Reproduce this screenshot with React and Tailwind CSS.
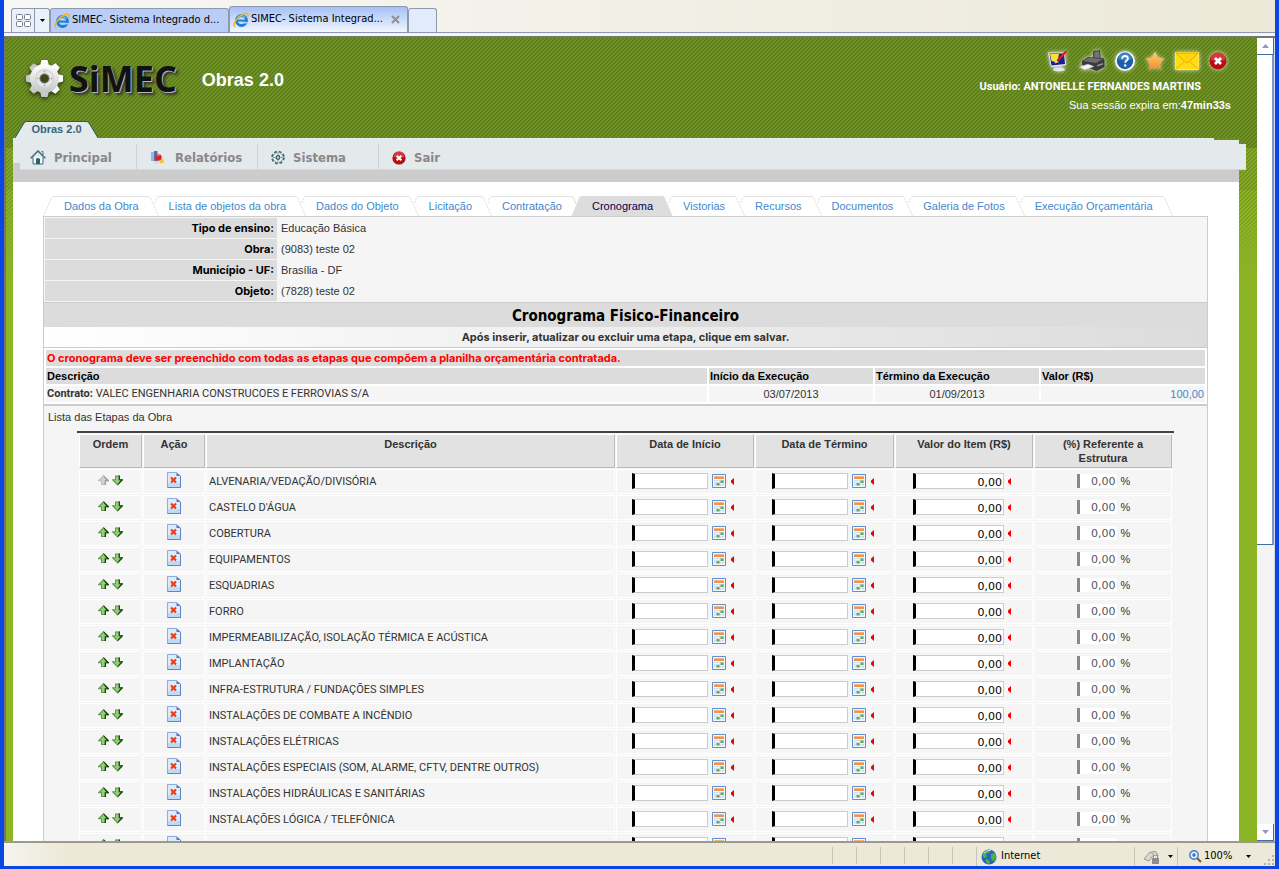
import { useState } from 'react';

const TABS = [
	'Dados da Obra',
	'Lista de objetos da obra',
	'Dados do Objeto',
	'Licitação',
	'Contratação',
	'Cronograma',
	'Vistorias',
	'Recursos',
	'Documentos',
	'Galeria de Fotos',
	'Execução Orçamentária',
];

const ETAPAS = [
	'ALVENARIA/VEDAÇÃO/DIVISÓRIA',
	"CASTELO D'ÁGUA",
	'COBERTURA',
	'EQUIPAMENTOS',
	'ESQUADRIAS',
	'FORRO',
	'IMPERMEABILIZAÇÃO, ISOLAÇÃO TÉRMICA E ACÚSTICA',
	'IMPLANTAÇÃO',
	'INFRA-ESTRUTURA / FUNDAÇÕES SIMPLES',
	'INSTALAÇÕES DE COMBATE A INCÊNDIO',
	'INSTALAÇÕES ELÉTRICAS',
	'INSTALAÇÕES ESPECIAIS (SOM, ALARME, CFTV, DENTRE OUTROS)',
	'INSTALAÇÕES HIDRÁULICAS E SANITÁRIAS',
	'INSTALAÇÕES LÓGICA / TELEFÔNICA',
	'',
];

const DADOS = [
	['Tipo de ensino:', 'Educação Básica'],
	['Obra:', '(9083) teste 02'],
	['Município - UF:', 'Brasília - DF'],
	['Objeto:', '(7828) teste 02'],
];

/* ---------- icons ---------- */

function IeIcon() {
	return (
		<svg width="16" height="16" viewBox="0 0 16 16" className="shrink-0">
			<circle cx="8.500" cy="8.500" r="5" fill="none" stroke="#1c7fd6" strokeWidth="2.800" />
			<path d="M9 9.900h6v1.600H9z" fill="#b9cdf6" />
			<path d="M5 8.600h9.500" stroke="#1c7fd6" strokeWidth="2" />
			<path d="M12.400 5.500A4.800 4.800 0 0 0 4.600 5.600" fill="none" stroke="#6cc4f5" strokeWidth="1.200" />
			<path d="M2.600 14.800C.2 14.600.6 10.600 4.400 6.400 8 2.400 13 .2 14.600 1.600c.8.700.5 2-.2 3.200" fill="none" stroke="#f0b428" strokeWidth="1.500" />
		</svg>
	);
}

function Gear() {
	return (
		<svg width="40" height="42" viewBox="0 0 40 42" className="drop-shadow-[0_2px_2px_rgba(0,0,0,0.6)]">
			<defs>
				<linearGradient id="gear" x1="0" y1="0" x2="0" y2="1">
					<stop offset="0" stopColor="#ffffff" />
					<stop offset="1" stopColor="#c4c4c4" />
				</linearGradient>
			</defs>
			<g fill="url(#gear)">
				{[0, 45, 90, 135].map((a) => (
					<path key={a} d="M16.5 1h6l1.5 6v25l-1.5 6h-6l-1.5-6V7z" transform={`rotate(${a} 19.5 19.5)`} />
				))}
				<circle cx="19.5" cy="19.5" r="14.5" />
			</g>
			<circle cx="19.5" cy="19.5" r="9" fill="#e6e6e6" stroke="#cfcfcf" />
			<circle cx="19.5" cy="19.5" r="4.6" fill="#3b4a1a" stroke="#777" />
			<g fill="#999">
				<circle cx="19.5" cy="12.5" r=".8" />
				<circle cx="19.5" cy="26.5" r=".8" />
				<circle cx="12.5" cy="19.5" r=".8" />
				<circle cx="26.5" cy="19.5" r=".8" />
			</g>
		</svg>
	);
}

function MonitorIcon() {
	return (
		<svg width="22" height="22" viewBox="0 0 22 22">
			<path d="M1 2.500h16.500L19 15 4 17z" fill="#e9e9ee" />
			<path d="M2.500 3.500H17l1 10.500-13.500 1.500z" fill="#14209a" />
			<path d="M3 4h9l-1 5-3 3-3.500-1z" fill="#f4e23a" />
			<path d="M10 9.500L18.500.5 20 2l-8 9z" fill="#e01818" />
			<path d="M9 10l3 2-4.500 1.500z" fill="#ffe850" />
			<path d="M8.500 16h6l1 2.500h-8z" fill="#c8c8d0" />
			<ellipse cx="12" cy="19.500" rx="6" ry="1.800" fill="#e6e6ea" />
		</svg>
	);
}

function PrinterIcon() {
	return (
		<svg width="26" height="22" viewBox="0 0 26 22">
			<path d="M14 1l7-1 1 10h-8z" fill="#4c4c50" />
			<path d="M15.500 2l4.500-.5.5 7h-5z" fill="#74747a" />
			<path d="M3 11l6-4 15 1 1.500 2v7l-8 4L3 15z" fill="#3a3a3e" />
			<path d="M4 11l6-3.500 14 1.500-7 4z" fill="#6c6c72" />
			<path d="M0 17l9-3 6 2.500L6 20z" fill="#f4f4f4" stroke="#999" strokeWidth=".5" />
			<path d="M18 15l6-2v1.500l-6 2z" fill="#999" />
		</svg>
	);
}

function HelpIcon() {
	return (
		<svg width="20" height="20" viewBox="0 0 20 20">
			<circle cx="10" cy="10" r="9" fill="#1d5fae" stroke="#fff" strokeWidth="1.6" />
			<path d="M3 8a7 7 0 0 1 14 0c-4 2-10 2-14 0z" fill="#4b8bd0" opacity=".7" />
			<path d="M7.200 7.800C7.200 5.800 8.500 5 10 5s2.900.9 2.900 2.500c0 2-2.700 2-2.700 4.300" fill="none" stroke="#fff" strokeWidth="1.900" />
			<circle cx="10.200" cy="14.400" r="1.250" fill="#fff" />
		</svg>
	);
}

function StarIcon() {
	return (
		<svg width="20" height="20" viewBox="0 0 20 20">
			<defs>
				<linearGradient id="star" x1="0" y1="0" x2="0" y2="1">
					<stop offset="0" stopColor="#ffd27a" />
					<stop offset="1" stopColor="#f68a1e" />
				</linearGradient>
			</defs>
			<path d="M10 0.500l2.900 6.300 6.600.8-4.900 4.600 1.400 6.800L10 15.700 4 19l1.400-6.800L.5 7.600l6.600-.8z" fill="url(#star)" />
		</svg>
	);
}

function MailIcon() {
	return (
		<svg width="24" height="18" viewBox="0 0 24 18">
			<path d="M.5.5h23v17H.5z" fill="#ffdc14" stroke="#ffe850" />
			<path d="M1 17l8.500-7.500M23 17l-8.500-7.500" fill="none" stroke="#f0b400" />
			<path d="M1 1l8.500 8.500q2.500 2 5 0L23 1z" fill="#ffd60a" stroke="#e8a800" />
		</svg>
	);
}

function CloseIcon({ size }) {
	return (
		<svg width={size} height={size} viewBox="0 0 18 18">
			<circle cx="9" cy="9" r="8.500" fill="#b80d14" />
			<path d="M1.500 7.500a7.500 7.500 0 0 1 15 0c-4 2-11 2-15 0z" fill="#e05a5a" opacity=".6" />
			<path d="M6 6l6 6M12 6l-6 6" stroke="#fff" strokeWidth="2.800" />
		</svg>
	);
}

function HomeIcon() {
	return (
		<svg width="16" height="15" viewBox="0 0 16 15">
			<path d="M3 7v7h10V7" fill="#f4f8f8" stroke="#3c6e78" />
			<path d="M.7 8.300L8 1l7.300 7.300" fill="none" stroke="#3c7580" strokeWidth="1.600" />
			<path d="M11.500 1.500h1.500V5" fill="none" stroke="#3c7580" />
			<path d="M6 14V9q2-2 4 0v5z" fill="#2f5f6b" />
		</svg>
	);
}

function ChartIcon() {
	return (
		<svg width="17" height="13" viewBox="0 0 17 13">
			<path d="M1 1h3v9H1z" fill="#9db4da" />
			<path d="M4 0h3.500v10H4z" fill="#4a72b8" />
			<circle cx="8.500" cy="6.500" r="3.200" fill="#dc2222" />
			<path d="M7 5q1-1.500 3-1" stroke="#f59090" fill="none" />
			<path d="M9.500 10.500l2.500-3 1.500 1 .5 3-3.500 1z" fill="#f5c431" />
			<path d="M3 10h5l2 2-4 .5z" fill="#d3d8e4" />
		</svg>
	);
}

function CogIcon() {
	return (
		<svg width="14" height="15" viewBox="0 0 15 15">
			<circle cx="7.500" cy="7.500" r="6.300" fill="none" stroke="#476a70" strokeWidth="2" strokeDasharray="3 1.950" />
			<circle cx="7.500" cy="7.500" r="5.300" fill="#edf3f3" stroke="#6d8b90" strokeWidth=".8" />
			<circle cx="7.500" cy="7.500" r="2" fill="#c5d8da" stroke="#2c4c52" strokeWidth="1.200" />
			<path d="M7.500 3.500v1M7.500 10.500v1M3.500 7.500h1M10.500 7.500h1" stroke="#2c4c52" />
		</svg>
	);
}

function ArrowUp({ off }) {
	return (
		<svg width="11" height="11" viewBox="0 0 11 11">
			<path d="M5.500 0L0 5.500v.8h3V10h5V6.300h3v-.8z" fill={off ? '#bdbdbd' : '#5f9a48'} />
			<path d="M5.500 0L11 5.500v.8H8V10H6.500V5z" fill={off ? '#9c9c9c' : '#1f3f1a'} />
			<path d="M5.500 1.500L2 5.300h2V9h2.500V5.300h2z" fill={off ? '#d2d2d2' : '#93cf78'} />
		</svg>
	);
}

function ArrowDown() {
	return (
		<svg width="11" height="11" viewBox="0 0 11 11">
			<path d="M5.500 10.500L0 5v-.8h3V.5h5v3.700h3V5z" fill="#5f9a48" />
			<path d="M5.500 10.500L11 5v-.8H8V.5H6.500v4.500z" fill="#27491f" />
			<path d="M5.500 9L2 5.200h2V1.500h2.500v3.700h2z" fill="#93cf78" />
		</svg>
	);
}

function DeleteIcon() {
	return (
		<svg width="14" height="16" viewBox="0 0 14 16">
			<path d="M.5.500h9L13.500 4v11.500H.5z" fill="#dcecfd" stroke="#8fabdc" />
			<path d="M1 11h12v4H1z" fill="#bcdaf9" />
			<path d="M.5 15.500h13V4" fill="none" stroke="#5f84c4" />
			<path d="M9.500 .5V4h4z" fill="#5279bd" />
			<path d="M4 5.500l5 5M9 5.500l-5 5" stroke="#f03c14" strokeWidth="2.200" />
		</svg>
	);
}

function CalendarIcon() {
	return (
		<svg width="14" height="14" viewBox="0 0 14 14">
			<path d="M.5.5h13v13H.5z" fill="#f3f8fe" stroke="#5b8fd0" />
			<path d="M2 2h10v3H2z" fill="#f6924a" />
			<path d="M2 2h10v1H2z" fill="#f9b27c" />
			<path d="M2 6h10v5.500H2z" fill="#c3d8f2" />
			<path d="M2 7.500h10M2 9.500h10M4 6v6M6.500 6v6M9.500 6v6" stroke="#f3f8fe" strokeWidth=".7" />
			<path d="M4.500 9h3v2.500h-3zM8.500 6.500h3V9h-3z" fill="#62ac4e" />
		</svg>
	);
}

function GlobeIcon() {
	return (
		<svg width="16" height="16" viewBox="0 0 16 16">
			<circle cx="8" cy="8" r="7.500" fill="#2566b8" />
			<path d="M2 4q3-4 7-3L8 4 5 5l1 3-3 1q-2-2-1-5zM10 5l4-1q2 4 0 7l-3 1-1-3zM5 10l3 1 1 3-2 1q-3-2-2-5z" fill="#4eb04a" />
			<path d="M3 4q3-3.500 7-2.500" stroke="#bde3ff" fill="none" />
		</svg>
	);
}

function Required() {
	return (
		<svg width="3" height="7" viewBox="0 0 3 7">
			<path d="M3 0v7L0 4.500v-2z" fill="#f00000" />
		</svg>
	);
}

function Caret({ up, color }) {
	return (
		<svg width="7" height="4" viewBox="0 0 7 4" className={up ? 'rotate-180' : ''}>
			<path d="M0 0h7L3.500 4z" fill={color || '#000'} />
		</svg>
	);
}

/* ---------- browser ---------- */

function BrowserTabs() {
	return (
		<div className="flex items-end h-[33px] shrink-0 pl-[7px] border-b border-[#8d99ae] bg-gradient-to-r from-[#f7f7f5] to-[#ece9d8] font-['DejaVu_Sans_Condensed','DejaVu_Sans',sans-serif] text-[11px] text-black">
			<div className="flex h-6 rounded-t-[3px] border border-b-0 border-[#8d99ae] bg-[#eaf1fb]">
				<button aria-label="Guias rápidas" className="w-[23px] flex items-center justify-center border-r border-[#8d99ae]">
					<svg width="15" height="13" viewBox="0 0 15 13" fill="#fff" stroke="#7b7f90">
						<rect x=".5" y=".5" width="6" height="5" rx="1" />
						<rect x="8.500" y=".5" width="6" height="5" rx="1" />
						<rect x=".5" y="7.500" width="6" height="5" rx="1" />
						<rect x="8.500" y="7.500" width="6" height="5" rx="1" />
					</svg>
				</button>
				<button aria-label="Lista de guias" className="w-[14px] flex items-center justify-center">
					<svg width="5" height="3" viewBox="0 0 5 3"><path d="M0 0h5L2.500 3z" /></svg>
				</button>
			</div>
			<button className="flex items-center gap-0.5 w-[179px] h-6 px-[3px] rounded-t-[3px] border border-b-0 border-[#8d99ae] bg-[#b9cdf6] whitespace-nowrap">
				<IeIcon />
				SIMEC- Sistema Integrado d...
			</button>
			<div className="flex items-center w-[179px] h-[26px] px-[3px] rounded-t-[3px] border border-b-0 border-[#8d99ae] bg-gradient-to-b from-[#a5c0f5] to-[#f2f6ff]">
				<button className="flex items-center gap-0.5 grow whitespace-nowrap">
					<IeIcon />
					SIMEC- Sistema Integrad...
				</button>
				<button aria-label="Fechar guia" className="mr-1">
					<svg width="9" height="9" viewBox="0 0 9 9"><path d="M1 1l7 7M8 1L1 8" stroke="#8f8f8f" strokeWidth="2" /></svg>
				</button>
			</div>
			<button aria-label="Nova guia" className="w-[29px] h-6 rounded-t-[3px] border border-b-0 border-[#8d99ae] bg-[#e2ebfa]" />
		</div>
	);
}

function ScrollBar() {
	return (
		<div className="w-[18px] shrink-0 flex flex-col bg-[#f3f3f3] border-r border-[#d5dbe8]">
			<button aria-label="Rolar para cima" className="h-[17px] shrink-0 flex items-center justify-center bg-white border-b border-r border-[#3f6da6]">
				<Caret up color="#8d97cf" />
			</button>
			<div className="h-[490px] shrink-0 bg-white border-r-2 border-b border-r-[#7f97c4] border-b-[#3f6da6]" />
			<div className="grow" />
			<button aria-label="Rolar para baixo" className="h-[17px] shrink-0 flex items-center justify-center bg-white border-b border-r border-[#3f6da6]">
				<Caret color="#8d97cf" />
			</button>
		</div>
	);
}

function StatusBar() {
	return (
		<div className="h-[25px] shrink-0 flex items-stretch justify-end pt-0.5 border-t-2 border-t-[#9c9a8c] bg-gradient-to-r from-[#f4f3ee] from-0% via-[#ece9d8] via-5% to-[#ece9d8] font-['DejaVu_Sans_Condensed','DejaVu_Sans',sans-serif] text-[11px] text-black">
			{[1, 2, 3, 4, 5, 6].map((n) => (
				<div key={n} className="w-6 mt-0.5 mb-0.5 border-l border-[#c9c6b6]" />
			))}
			<div className="flex items-center gap-1 w-[158px] mt-0.5 pl-1 border-l border-[#c9c6b6]">
				<GlobeIcon />
				Internet
			</div>
			<div className="flex items-center gap-2 w-[43px] mt-0.5 pl-2 border-l border-[#c9c6b6]">
				<svg width="17" height="14" viewBox="0 0 17 14">
					<path d="M1 9l6-7 4 2-5 7z" fill="#d9d9d6" stroke="#999" />
					<path d="M7 3q6-4 8 3" fill="none" stroke="#aaa" strokeWidth="1.500" />
					<path d="M9 8h7v6H9z" fill="#8c8c8c" />
					<path d="M10.500 8V6q2-2 4 0v2" fill="none" stroke="#8c8c8c" />
				</svg>
				<svg width="5" height="3" viewBox="0 0 5 3"><path d="M0 0h5L2.500 3z" /></svg>
			</div>
			<div className="flex items-center w-[98px] mt-0.5 pl-[11px] border-l border-[#c9c6b6]">
				<svg width="13" height="13" viewBox="0 0 13 13">
					<path d="M7.500 7.500l4.500 4.500" stroke="#8a5a2c" strokeWidth="2.200" />
					<circle cx="5" cy="5" r="4.200" fill="#e2f0fd" stroke="#3d7cc4" strokeWidth="1.400" />
					<path d="M5 3v4M3 5h4" stroke="#1f55b0" strokeWidth="1.200" />
				</svg>
				<span className="ml-0.5">100%</span>
				<svg width="5" height="3" viewBox="0 0 5 3" className="ml-auto mr-auto"><path d="M0 0h5L2.500 3z" /></svg>
				<svg width="11" height="11" viewBox="0 0 11 11" className="self-end" fill="#b5b2a0">
					<path d="M8 0h2v2H8zM4 4h2v2H4zM8 4h2v2H8zM0 8h2v2H0zM4 8h2v2H4zM8 8h2v2H8z" />
				</svg>
			</div>
		</div>
	);
}

/* ---------- page ---------- */

function Header() {
	const glow = 'drop-shadow-[0_0_2px_rgba(255,255,255,0.8)]';
	return (
		<header className="flex flex-col h-[100px] pl-[9px] pr-[26px]">
			<div className="flex h-[83px]">
				<div className="flex items-start pt-[21px] pl-[10px]">
					<Gear />
					<span className="ml-1 font-['Open_Sans',sans-serif] font-bold text-[36px] leading-[40px] text-[#111] [text-shadow:1px_1px_0_#b5b5b5,3px_3px_3px_#333]">
						SiMEC
					</span>
				</div>
				<h1 className="ml-[25px] pt-[30px] text-[18px] leading-[24px] font-bold text-white">Obras 2.0</h1>
				<div className="ml-auto flex flex-col items-end text-white text-[11px]">
					<div className="flex items-center gap-[10px] h-[22px] mt-3 mr-1">
						<button aria-label="Sistemas" className={glow}><MonitorIcon /></button>
						<button aria-label="Imprimir" className={glow}><PrinterIcon /></button>
						<button aria-label="Ajuda" className={glow}><HelpIcon /></button>
						<button aria-label="Favoritos" className={glow}><StarIcon /></button>
						<button aria-label="Mensagens" className={glow}><MailIcon /></button>
						<button aria-label="Fechar" className={glow}><CloseIcon size={18} /></button>
					</div>
					<p className="mt-[6px] mr-[30px] leading-[18px] font-bold font-['Roboto','Liberation_Sans',sans-serif]">Usuário: ANTONELLE FERNANDES MARTINS</p>
					<p className="leading-[18px]">Sua sessão expira em:<b>47min33s</b></p>
				</div>
			</div>
			<a href="#obras" className="relative w-[83px] h-[17px] text-center text-[11px] leading-[17px] font-bold text-[#336680]">
				<svg width="83" height="17" viewBox="0 0 83 17" className="absolute inset-0">
					<path d="M0 17L9 2Q10 .5 12 .5h59q2 0 3 1.500L83 17z" fill="#e4e9ec" />
					<path d="M0 17L9 2Q10 .5 12 .5h59q2 0 3 1.500L83 17" fill="none" stroke="#34566b" />
				</svg>
				<span className="relative">Obras 2.0</span>
			</a>
		</header>
	);
}

function Menu() {
	const items = [
		['Principal', <HomeIcon />, 'w-[117px] pl-[10px] flex items-center border-r border-[#cfd3d6]'],
		['Relatórios', <ChartIcon />, 'w-[121px] pl-[13px] flex items-center border-r border-[#cfd3d6]'],
		['Sistema', <CogIcon />, 'w-[121px] pl-[13px] flex items-center border-r border-[#cfd3d6]'],
		['Sair', <CloseIcon size={14} />, 'w-[121px] pl-[13px] flex items-center'],
	];
	return (
		<nav className="bg-[#ccc] h-11">
			<div className="flex h-0.5">
				<div className="grow bg-[#e4e9ec]" />
				<div className="w-[25px] bg-[#6b8d22]" />
			</div>
			<div className="h-1 bg-[#e4e9ec]" />
			<div className="flex -mr-[7px]">
				<div className="w-[7px] h-[19px] bg-[#e4e9ec]" />
				<ul className="flex grow h-[26px] bg-[#e4e9ec] border-b border-[#d4d8da]">
					{items.map(([label, icon, classe]) => (
						<li key={label} className={classe}>
							<a href="#menu" className="flex items-center gap-2 pt-0.5 font-['DejaVu_Sans_Condensed','DejaVu_Sans',sans-serif] font-bold text-[13px] leading-[16px] text-[#888]">
								{icon}
								{label}
							</a>
						</li>
					))}
				</ul>
			</div>
		</nav>
	);
}

// slanted edge between two tabs
function TabEdge({ left, right, last }) {
	return (
		<svg width="11" height="20" viewBox="0 0 11 20" className="shrink-0">
			{left && <path d="M0 0q2 0 3 2l7.500 18H0z" fill="#ddd" />}
			{right && <path d="M11 0Q9 0 8 2L.5 20H11z" fill="#ddd" />}
			{!left && !right && <path d="M0 .5Q2 .5 3 3l7.500 17" fill="none" stroke="#ddd" strokeDasharray="2 1" />}
			{!last && !right && <path d="M11 .5q-2 0-3 3L7 7" fill="none" stroke="#ddd" strokeDasharray="2 1" />}
			{right && <path d="M0 .5Q2 .5 3 3l2 5" fill="none" stroke="#ddd" />}
		</svg>
	);
}

function Tabs({ ativa, setAtiva }) {
	const idx = TABS.indexOf(ativa);
	return (
		<div className="flex h-5">
			<svg width="11" height="20" viewBox="0 0 11 20" className="shrink-0">
				<path d="M11 .5Q9 .5 8 3L.5 20" fill="none" stroke="#ddd" strokeDasharray="2 1" />
			</svg>
			{TABS.map((t, i) => (
				<div key={t} className="flex">
					<button
						onClick={() => setAtiva(t)}
						className={
							i === idx
								? 'pl-[10px] pr-[9px] border-t border-[#ddd] bg-[#ddd] text-[11px] leading-[19px] text-[#000055] whitespace-nowrap'
								: 'pl-[10px] pr-[9px] border-t border-[#e4e4e4] text-[11px] leading-[19px] text-[#4488cc] whitespace-nowrap'
						}
					>
						{t}
					</button>
					<TabEdge left={i === idx} right={i + 1 === idx} last={i === TABS.length - 1} />
				</div>
			))}
		</div>
	);
}

function Contrato() {
	return (
		<table className="w-full table-fixed border-separate border-spacing-[2px] bg-white border-b-2 border-[#ccc] leading-[16px]">
			<colgroup>
				<col />
				<col className="w-[164px]" />
				<col className="w-[164px]" />
				<col className="w-[164px]" />
			</colgroup>
			<tbody>
				<tr className="bg-[#dcdcdc]">
					<td colSpan={4} className="px-px font-['Inter','Liberation_Sans',sans-serif] font-bold text-[#ff0000]">
						O cronograma deve ser preenchido com todas as etapas que compõem a planilha orçamentária contratada.
					</td>
				</tr>
				<tr className="bg-[#dcdcdc] text-left text-black">
					<th className="px-px">Descrição</th>
					<th className="px-px">Início da Execução</th>
					<th className="px-px">Término da Execução</th>
					<th className="px-px">Valor (R$)</th>
				</tr>
				<tr className="bg-[#f5f5f5]">
					<td className="px-px font-['Roboto','Liberation_Sans',sans-serif]">
						<b>Contrato:</b> VALEC ENGENHARIA CONSTRUCOES E FERROVIAS S/A
					</td>
					<td className="text-center">03/07/2013</td>
					<td className="text-center">01/09/2013</td>
					<td className="px-px text-right text-[#4488cc]">100,00</td>
				</tr>
			</tbody>
		</table>
	);
}

function DateField({ label }) {
	return (
		<div className="flex items-center justify-center pr-1">
			<input aria-label={label} className="w-[76px] h-4 px-1 bg-white border border-[#ccc] border-l-[3px] border-l-black text-[11px] outline-none" />
			<button aria-label="Abrir calendário" className="ml-1"><CalendarIcon /></button>
			<span className="ml-[5px]"><Required /></span>
		</div>
	);
}

function Etapas() {
	const th = 'h-[34px] pt-[2px] align-top leading-[14px] bg-[#e2e2e2] border border-t-white border-l-white border-r-[#bbb] border-b-[#bbb]';
	const td = 'h-[25px] pb-px border border-white';
	const verdana = "font-['DejaVu_Sans',sans-serif] text-[11px] leading-[14px] text-right outline-none bg-white";
	return (
		<div className="mx-[33px] mt-[6px] px-px border-t-2 border-[#444]">
			<table className="w-full table-fixed border-separate border-spacing-[1px]">
				<colgroup>
					<col className="w-[63px]" />
					<col className="w-[62px]" />
					<col />
					<col className="w-[138px]" />
					<col className="w-[139px]" />
					<col className="w-[138px]" />
					<col className="w-[138px]" />
				</colgroup>
				<thead>
					<tr>
						<th className={th}>Ordem</th>
						<th className={th}>Ação</th>
						<th className={th}>Descrição</th>
						<th className={th}>Data de Início</th>
						<th className={th}>Data de Término</th>
						<th className={th}>Valor do Item (R$)</th>
						<th className={th}>(%) Referente a<br />Estrutura</th>
					</tr>
				</thead>
				<tbody>
					{ETAPAS.map((nome, i) => (
						<tr key={i}>
							<td className={td}>
								<div className="flex justify-center gap-[3px] pb-0.5">
									<button aria-label="Subir" disabled={i === 0}><ArrowUp off={i === 0} /></button>
									<button aria-label="Descer"><ArrowDown /></button>
								</div>
							</td>
							<td className={td}>
								<button aria-label="Excluir" className="block mx-auto mb-0.5"><DeleteIcon /></button>
							</td>
							<td className="h-[25px] pt-px px-[2px] border border-white font-['Roboto','Liberation_Sans',sans-serif]">{nome}</td>
							<td className={td}><DateField label={'Data de início ' + nome} /></td>
							<td className={td}><DateField label={'Data de término ' + nome} /></td>
							<td className={td}>
								<div className="flex items-center justify-center pr-1">
									<input aria-label={'Valor ' + nome} defaultValue="0,00" className={verdana + ' w-[91px] h-4 pt-0.5 pr-px border border-[#ccc] border-l-[3px] border-l-black text-black'} />
									<span className="ml-1"><Required /></span>
								</div>
							</td>
							<td className={td}>
								<div className="flex items-center justify-center pl-px">
									<input aria-label={'Percentual ' + nome} readOnly defaultValue="0,00" className={verdana + ' w-10 h-[14px] pt-0.5 pr-px border-l-[3px] border-[#888] text-[#555]'} />
									<span className="ml-1">%</span>
								</div>
							</td>
						</tr>
					))}
				</tbody>
			</table>
		</div>
	);
}

function App() {
	const [ativa, setAtiva] = useState('Cronograma');

	return (
		<div className="h-screen flex flex-col overflow-hidden border-l-4 border-r-4 border-b-[3px] border-[#0a46e4] bg-[#ece9d8] font-['Liberation_Sans',Arial,sans-serif] text-[11px] text-[#333]">
			<BrowserTabs />
			<div className="h-[3px] shrink-0 bg-[#f6f6f8]" />
			<div className="flex grow min-h-0 border-t-2 border-l-2 border-[#77756a]">
				<div className="relative grow min-w-0 overflow-hidden pr-[18px] pl-[7px] bg-[linear-gradient(to_bottom,transparent_150px,#8cb526_250px),linear-gradient(135deg,rgba(0,0,0,0.14)_25%,transparent_25%,transparent_50%,rgba(0,0,0,0.14)_50%,rgba(0,0,0,0.14)_75%,transparent_75%),linear-gradient(to_bottom,#6f9323_110px,#84aa26_110px,#84aa26_152px,#8cb526_152px)] bg-[length:auto,4px_4px,auto]">
					<div className="-ml-[7px] -mr-[18px]"><Header /></div>
					<Menu />
					<main className="bg-white pl-[30px] pr-[31px] pt-[14px] pb-6">
						<Tabs ativa={ativa} setAtiva={setAtiva} />
						<section className="border border-[#ccc] bg-[#f5f5f5]">
							<table className="w-full border-separate border-spacing-[1px] border-b border-[#ccc] h-[86px]">
								<tbody>
									{DADOS.map(([rotulo, valor]) => (
										<tr key={rotulo}>
											<th className="w-[232px] h-5 px-[3px] text-right text-black bg-[#dcdcdc] font-['Inter','Liberation_Sans',sans-serif]">{rotulo}</th>
											<td className="px-[3px]">{valor}</td>
										</tr>
									))}
								</tbody>
							</table>
							<h2 className="h-6 bg-[#dcdcdc] text-center font-['DejaVu_Sans_Condensed','DejaVu_Sans',sans-serif] font-bold text-[15px] leading-[26px] text-black">
								Cronograma Fisico-Financeiro
							</h2>
							<p className="h-[21px] bg-gradient-to-r from-white to-[#dcdcdc] border-b border-[#ccc] text-center font-['Inter','Liberation_Sans',sans-serif] font-bold leading-[20px]">
								Após inserir, atualizar ou excluir uma etapa, clique em salvar.
							</p>
							<Contrato />
							<p className="px-1 pt-[3px] leading-[16px]">Lista das Etapas da Obra</p>
							<Etapas />
						</section>
					</main>
				</div>
				<ScrollBar />
			</div>
			<StatusBar />
		</div>
	);
}

export default App;
